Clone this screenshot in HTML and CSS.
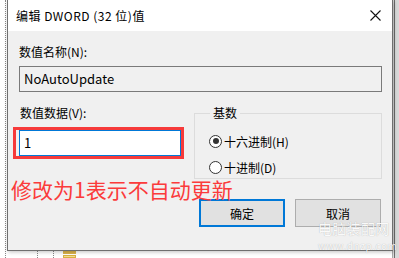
FILE: index.html
```
<!DOCTYPE html>
<html>
<head>
<meta charset="utf-8">
<link rel="stylesheet" href="styles.css">
</head>
<body>
<div class="screen">
  <div class="tree-line tl1"></div>
  <div class="tree-line tl2"></div>
  <div class="tree-line tl3"></div>
  <div class="folder f1"></div>
  <div class="folder f2"></div>
  <div class="right-edge"></div>

  <div class="dialog">
    <div class="titlebar">
      <span class="title">编辑 DWORD (32 位)值</span>
      <svg class="close" width="11" height="11" viewBox="0 0 11 11"><path d="M0.5 0.5 L10.5 10.5 M10.5 0.5 L0.5 10.5" stroke="#111" stroke-width="1.1" fill="none"/></svg>
    </div>
    <div class="body">
      <div class="label">数值名称(N):</div>
      <div class="field readonly">NoAutoUpdate</div>
      <div class="row">
        <div class="col-left">
          <div class="label">数值数据(V):</div>
          <div class="highlight">
            <div class="field active">1</div>
          </div>
        </div>
        <fieldset class="group">
          <legend>基数</legend>
          <label class="radio"><span class="dot checked"></span>十六进制(H)</label>
          <label class="radio"><span class="dot"></span>十进制(D)</label>
        </fieldset>
      </div>
      <div class="note">修改为1表示不自动更新</div>
      <div class="buttons">
        <div class="btn primary">确定</div>
        <div class="btn">取消</div>
      </div>
    </div>
  </div>

  <div class="watermark">
    <div class="wm1">电脑装配网</div>
    <div class="wm2">www.dnzp.com</div>
  </div>
</div>
</body>
</html>
```
FILE: styles.css
```
* { box-sizing: border-box; }
html, body { margin: 0; padding: 0; }
body {
  width: 399px; height: 258px; overflow: hidden;
  font-family: "Noto Sans CJK SC", "Liberation Sans", sans-serif;
  font-size: 12px; color: #000; background: #fff;
}
.screen { position: relative; width: 399px; height: 258px; background: #fff; }
.tree-line { position: absolute; border-left: 1px dotted #888; }
.tl1 { left: 5px; top: 0; height: 258px; }
.tl2 { left: 37px; top: 251px; height: 7px; }
.tl3 { left: 53px; top: 251px; height: 7px; }
.folder { position: absolute; left: 63px; width: 13px; height: 3px; background: #dcb44a; }
.f1 { top: 251px; }
.f2 { top: 255px; height: 3px; border: 1px solid #d8b040; background: #f4dc8c; }
.right-edge {
  position: absolute; left: 392px; top: 0; width: 7px; height: 258px;
  background: #d9d9d9;
  border-left: 1px solid #a8a8a8;
}
.right-edge::after {
  content: ""; position: absolute; left: 1px; top: 0; width: 1px; height: 100%; background: #6d6d6d;
}

.dialog {
  position: absolute; left: 7px; top: 0; width: 386px; height: 251px;
  border: 1px solid #6f6f6f; border-top: none;
  background: #f0f0f0;
  box-shadow: 1px 1px 4px rgba(0,0,0,0.25);
}
.titlebar {
  height: 31px; background: #fff;
  display: flex; align-items: center; justify-content: space-between;
  padding: 0 11px 0 8px;
}
.title { font-size: 12px; letter-spacing: 0.5px; }
.close { display: block; }

.body { padding: 12px 10px 0 11px; }
.label { line-height: 18px; height: 18px; margin-bottom: 5px; }
.field {
  height: 26px; border: 1px solid #7a7a7a; line-height: 24px;
  padding-left: 4px; font-size: 13px;
}
.readonly { background: #f0f0f0; width: 363px; }
.row { display: flex; margin-top: 12px; }
.col-left { width: 176px; }
.col-left .label { margin-bottom: 5px; margin-left: 1px; }
.highlight {
  margin-left: -6px; width: 171px; height: 32px;
  border: 3px solid #f63a3a; padding: 0;
}
.active {
  border-color: #0078d7; background: #fff;
  height: 26px; width: 162px; margin-left: 3px;
}
.group {
  margin: 1px 0 0 -1px; padding: 0 0 0 14px; width: 188px; height: 74px;
  border: 1px solid #dcdcdc; border-radius: 0;
}
.group legend { padding: 0 3px 0 3px; margin-left: 1px; line-height: 16px; font-size: 12px; }
.radio { display: flex; align-items: center; height: 14px; margin-top: 13px; }
.radio + .radio { margin-top: 12px; }
.dot {
  width: 13px; height: 13px; border-radius: 50%; border: 1px solid #333; background: #fff;
  margin-right: 2px; position: relative; flex: none;
}
.dot.checked::after {
  content: ""; position: absolute; left: 2.5px; top: 2.5px; width: 6px; height: 6px; border-radius: 50%; background: #333;
}
.note {
  color: #fb3b3b; font-size: 21px; line-height: 24px; margin: -2px 0 0 -8px; position: relative;
}
.buttons { display: flex; gap: 10px; margin: -2px 0 0 180px; }
.btn {
  width: 86px; height: 28px; border: 1px solid #adadad; background: #e1e1e1;
  display: flex; align-items: center; justify-content: center;
}
.btn.primary { border: 2px solid #0078d7; }
.watermark {
  position: absolute; left: 318px; top: 220px; color: rgba(255,255,255,0.95);
  text-shadow: 0 0 1px rgba(0,0,0,0.3);
}
.wm1 { font-size: 14px; line-height: 17px; letter-spacing: 0.3px; }
.wm2 { font-size: 10px; line-height: 13px; letter-spacing: 0.6px; margin-top: 2px; }
```
